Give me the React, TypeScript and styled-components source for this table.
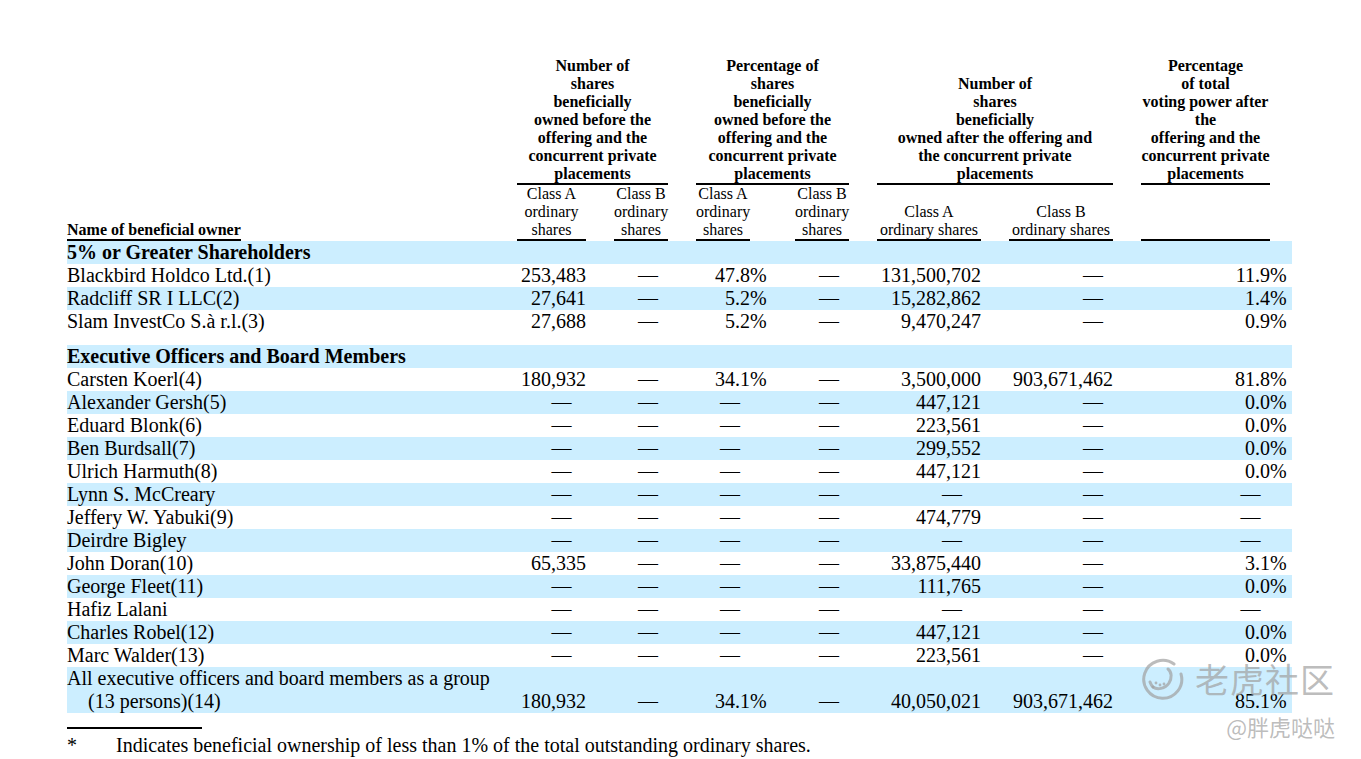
import React from 'react';
import styled, { createGlobalStyle } from 'styled-components';

const GlobalStyle = createGlobalStyle`
  html, body {
    margin: 0;
    padding: 0;
    background: #fff;
  }
  body {
    font-family: "Liberation Serif", "Times New Roman", serif;
    color: #000;
  }
`;

// name | A | gap | B | gap | pctA | % | pctB | gap | afterA | gap | afterB | gap | voting | %
const COLUMNS = '450px 69px 28px 54px 28px 54px 45px 54px 28px 104px 28px 104px 28px 129px 22px';
const SHADE = '#cceeff';

const Page = styled.div`
  position: relative;
  width: 1225px;
  padding: 57px 0 0 67px;
`;

const HeaderGrid = styled.div`
  display: grid;
  grid-template-columns: ${COLUMNS};
  grid-template-rows: auto auto;
  font-size: 16px;
  line-height: 18px;
`;

const OwnerLabel = styled.div`
  grid-column: 1;
  grid-row: 1 / 3;
  align-self: end;
  font-weight: bold;

  span {
    display: inline-block;
    border-bottom: 2px solid #000;
  }
`;

const GroupHead = styled.div<{ $col: string }>`
  grid-column: ${p => p.$col};
  grid-row: 1;
  align-self: end;
  text-align: center;
  font-weight: bold;
  border-bottom: 2px solid #000;
`;

const SubHead = styled.div<{ $col: number }>`
  grid-column: ${p => p.$col};
  grid-row: 2;
  display: flex;
  flex-direction: column;
  justify-content: flex-end;
  text-align: center;
  white-space: nowrap;
  border-bottom: 2px solid #000;
`;

const Row = styled.div<{ $shaded?: boolean }>`
  display: grid;
  grid-template-columns: ${COLUMNS};
  align-items: end;
  background: ${p => (p.$shaded ? SHADE : 'transparent')};
  font-size: 20px;
  line-height: 23px;
`;

const SectionTitle = styled.div`
  grid-column: 1 / -1;
  font-weight: bold;
`;

const Spacer = styled.div`
  height: 12px;
`;

const NameCell = styled.div`
  grid-column: 1;
  white-space: nowrap;
`;

const NameLine = styled.div<{ $indent?: boolean }>`
  padding-left: ${p => (p.$indent ? '21px' : '0')};
`;

const Cell = styled.div<{ $col: number; $dash?: number }>`
  grid-column: ${p => p.$col};
  white-space: nowrap;
  text-align: ${p => (p.$dash !== undefined ? 'center' : 'right')};
  padding-left: ${p => (p.$dash ? p.$dash * 2 : 0)}px;
`;

const Percent = styled.div<{ $col: number }>`
  grid-column: ${p => p.$col};
  text-align: left;
`;

const FootRule = styled.div`
  width: 135px;
  height: 2px;
  margin-top: 14px;
  background: #000;
`;

const Footnote = styled.div`
  display: flex;
  margin-top: 5px;
  font-size: 20px;
  line-height: 23px;
`;

const Star = styled.span`
  width: 49px;
`;

const Watermark = styled.div`
  position: absolute;
  left: 1141px;
  top: 656px;
  width: max-content;
  white-space: nowrap;
  display: flex;
  flex-direction: column;
  align-items: flex-end;
  font-family: "Noto Sans CJK SC", "Noto Sans", sans-serif;
  color: rgba(160, 160, 160, 0.7);
  pointer-events: none;
`;

const MarkTop = styled.div`
  display: flex;
  align-items: center;
  gap: 10px;
  font-size: 34px;
  line-height: 46px;
  letter-spacing: 1px;
`;

const MarkUser = styled.div`
  font-size: 22px;
  line-height: 30px;
  margin-top: 9px;
`;

type Value = string | null;

interface OwnerRow {
  name: string[];
  values: Value[];
  shaded?: boolean;
}

type Item =
  | { kind: 'section'; title: string; shaded: boolean }
  | { kind: 'spacer' }
  | ({ kind: 'owner' } & OwnerRow);

const DATA_COLS = [2, 4, 6, 8, 10, 12, 14];
const DASH_SHIFT = [10, 7, 7, 7, 23, 32, 45];
const PCT_INDEX = [2, 6];

const D = null;

const items: Item[] = [
  { kind: 'section', title: '5% or Greater Shareholders', shaded: true },
  { kind: 'owner', name: ['Blackbird Holdco Ltd.(1)'], values: ['253,483', D, '47.8', D, '131,500,702', D, '11.9'] },
  { kind: 'owner', name: ['Radcliff SR I LLC(2)'], values: ['27,641', D, '5.2', D, '15,282,862', D, '1.4'], shaded: true },
  { kind: 'owner', name: ['Slam InvestCo S.à r.l.(3)'], values: ['27,688', D, '5.2', D, '9,470,247', D, '0.9'] },
  { kind: 'spacer' },
  { kind: 'section', title: 'Executive Officers and Board Members', shaded: true },
  { kind: 'owner', name: ['Carsten Koerl(4)'], values: ['180,932', D, '34.1', D, '3,500,000', '903,671,462', '81.8'] },
  { kind: 'owner', name: ['Alexander Gersh(5)'], values: [D, D, D, D, '447,121', D, '0.0'], shaded: true },
  { kind: 'owner', name: ['Eduard Blonk(6)'], values: [D, D, D, D, '223,561', D, '0.0'] },
  { kind: 'owner', name: ['Ben Burdsall(7)'], values: [D, D, D, D, '299,552', D, '0.0'], shaded: true },
  { kind: 'owner', name: ['Ulrich Harmuth(8)'], values: [D, D, D, D, '447,121', D, '0.0'] },
  { kind: 'owner', name: ['Lynn S. McCreary'], values: [D, D, D, D, D, D, D], shaded: true },
  { kind: 'owner', name: ['Jeffery W. Yabuki(9)'], values: [D, D, D, D, '474,779', D, D] },
  { kind: 'owner', name: ['Deirdre Bigley'], values: [D, D, D, D, D, D, D], shaded: true },
  { kind: 'owner', name: ['John Doran(10)'], values: ['65,335', D, D, D, '33,875,440', D, '3.1'] },
  { kind: 'owner', name: ['George Fleet(11)'], values: [D, D, D, D, '111,765', D, '0.0'], shaded: true },
  { kind: 'owner', name: ['Hafiz Lalani'], values: [D, D, D, D, D, D, D] },
  { kind: 'owner', name: ['Charles Robel(12)'], values: [D, D, D, D, '447,121', D, '0.0'], shaded: true },
  { kind: 'owner', name: ['Marc Walder(13)'], values: [D, D, D, D, '223,561', D, '0.0'] },
  {
    kind: 'owner',
    name: ['All executive officers and board members as a group', '(13 persons)(14)'],
    values: ['180,932', D, '34.1', D, '40,050,021', '903,671,462', '85.1'],
    shaded: true,
  },
];

const TigerMark: React.FC = () => (
  <svg width="44" height="44" viewBox="0 0 44 44" fill="none" stroke="currentColor" strokeWidth="3" strokeLinecap="round">
    <path d="M33 7 A19 19 0 1 0 40 17" />
    <path d="M12 30 C16 33 24 32 28 26 C31 21 31 15 27 12" />
    <path d="M9 25 C10 28 12 30 12 30" />
    <circle cx="15" cy="26" r="1.4" fill="currentColor" stroke="none" />
    <circle cx="19" cy="28" r="1.4" fill="currentColor" stroke="none" />
    <circle cx="23" cy="27" r="1.4" fill="currentColor" stroke="none" />
  </svg>
);

const OwnerLine: React.FC<OwnerRow> = ({ name, values, shaded }) => (
  <Row $shaded={shaded}>
    <NameCell>
      {name.map((line, i) => (
        <NameLine key={line} $indent={i > 0}>{line}</NameLine>
      ))}
    </NameCell>
    {values.map((v, i) => {
      const col = DATA_COLS[i];
      if (v === null) {
        return <Cell key={col} $col={col} $dash={DASH_SHIFT[i]}>—</Cell>;
      }
      return (
        <React.Fragment key={col}>
          <Cell $col={col}>{v}</Cell>
          {PCT_INDEX.includes(i) && <Percent $col={col + 1}>%</Percent>}
        </React.Fragment>
      );
    })}
  </Row>
);

const App: React.FC = () => {
  return (
    <>
      <GlobalStyle />
      <Page>
        <HeaderGrid>
          <OwnerLabel>
            <span>Name of beneficial owner</span>
          </OwnerLabel>
          <GroupHead $col="2 / 5">
            Number of<br />shares<br />beneficially<br />owned before the<br />offering and the<br />concurrent private<br />placements
          </GroupHead>
          <GroupHead $col="6 / 9">
            Percentage of<br />shares<br />beneficially<br />owned before the<br />offering and the<br />concurrent private<br />placements
          </GroupHead>
          <GroupHead $col="10 / 13">
            Number of<br />shares<br />beneficially<br />owned after the offering and<br />the concurrent private<br />placements
          </GroupHead>
          <GroupHead $col="14">
            Percentage<br />of total<br />voting power after<br />the<br />offering and the<br />concurrent private<br />placements
          </GroupHead>
          <SubHead $col={2}><span>Class A</span><span>ordinary</span><span>shares</span></SubHead>
          <SubHead $col={4}><span>Class B</span><span>ordinary</span><span>shares</span></SubHead>
          <SubHead $col={6}><span>Class A</span><span>ordinary</span><span>shares</span></SubHead>
          <SubHead $col={8}><span>Class B</span><span>ordinary</span><span>shares</span></SubHead>
          <SubHead $col={10}><span>Class A</span><span>ordinary shares</span></SubHead>
          <SubHead $col={12}><span>Class B</span><span>ordinary shares</span></SubHead>
          <SubHead $col={14} />
        </HeaderGrid>

        {items.map((item, i) => {
          if (item.kind === 'spacer') return <Spacer key={i} />;
          if (item.kind === 'section') {
            return (
              <Row key={i} $shaded={item.shaded}>
                <SectionTitle>{item.title}</SectionTitle>
              </Row>
            );
          }
          return <OwnerLine key={i} name={item.name} values={item.values} shaded={item.shaded} />;
        })}

        <FootRule />
        <Footnote>
          <Star>*</Star>
          <span>Indicates beneficial ownership of less than 1% of the total outstanding ordinary shares.</span>
        </Footnote>

        <Watermark>
          <MarkTop>
            <TigerMark />
            <span>老虎社区</span>
          </MarkTop>
          <MarkUser>@胖虎哒哒</MarkUser>
        </Watermark>
      </Page>
    </>
  );
};

export default App;
